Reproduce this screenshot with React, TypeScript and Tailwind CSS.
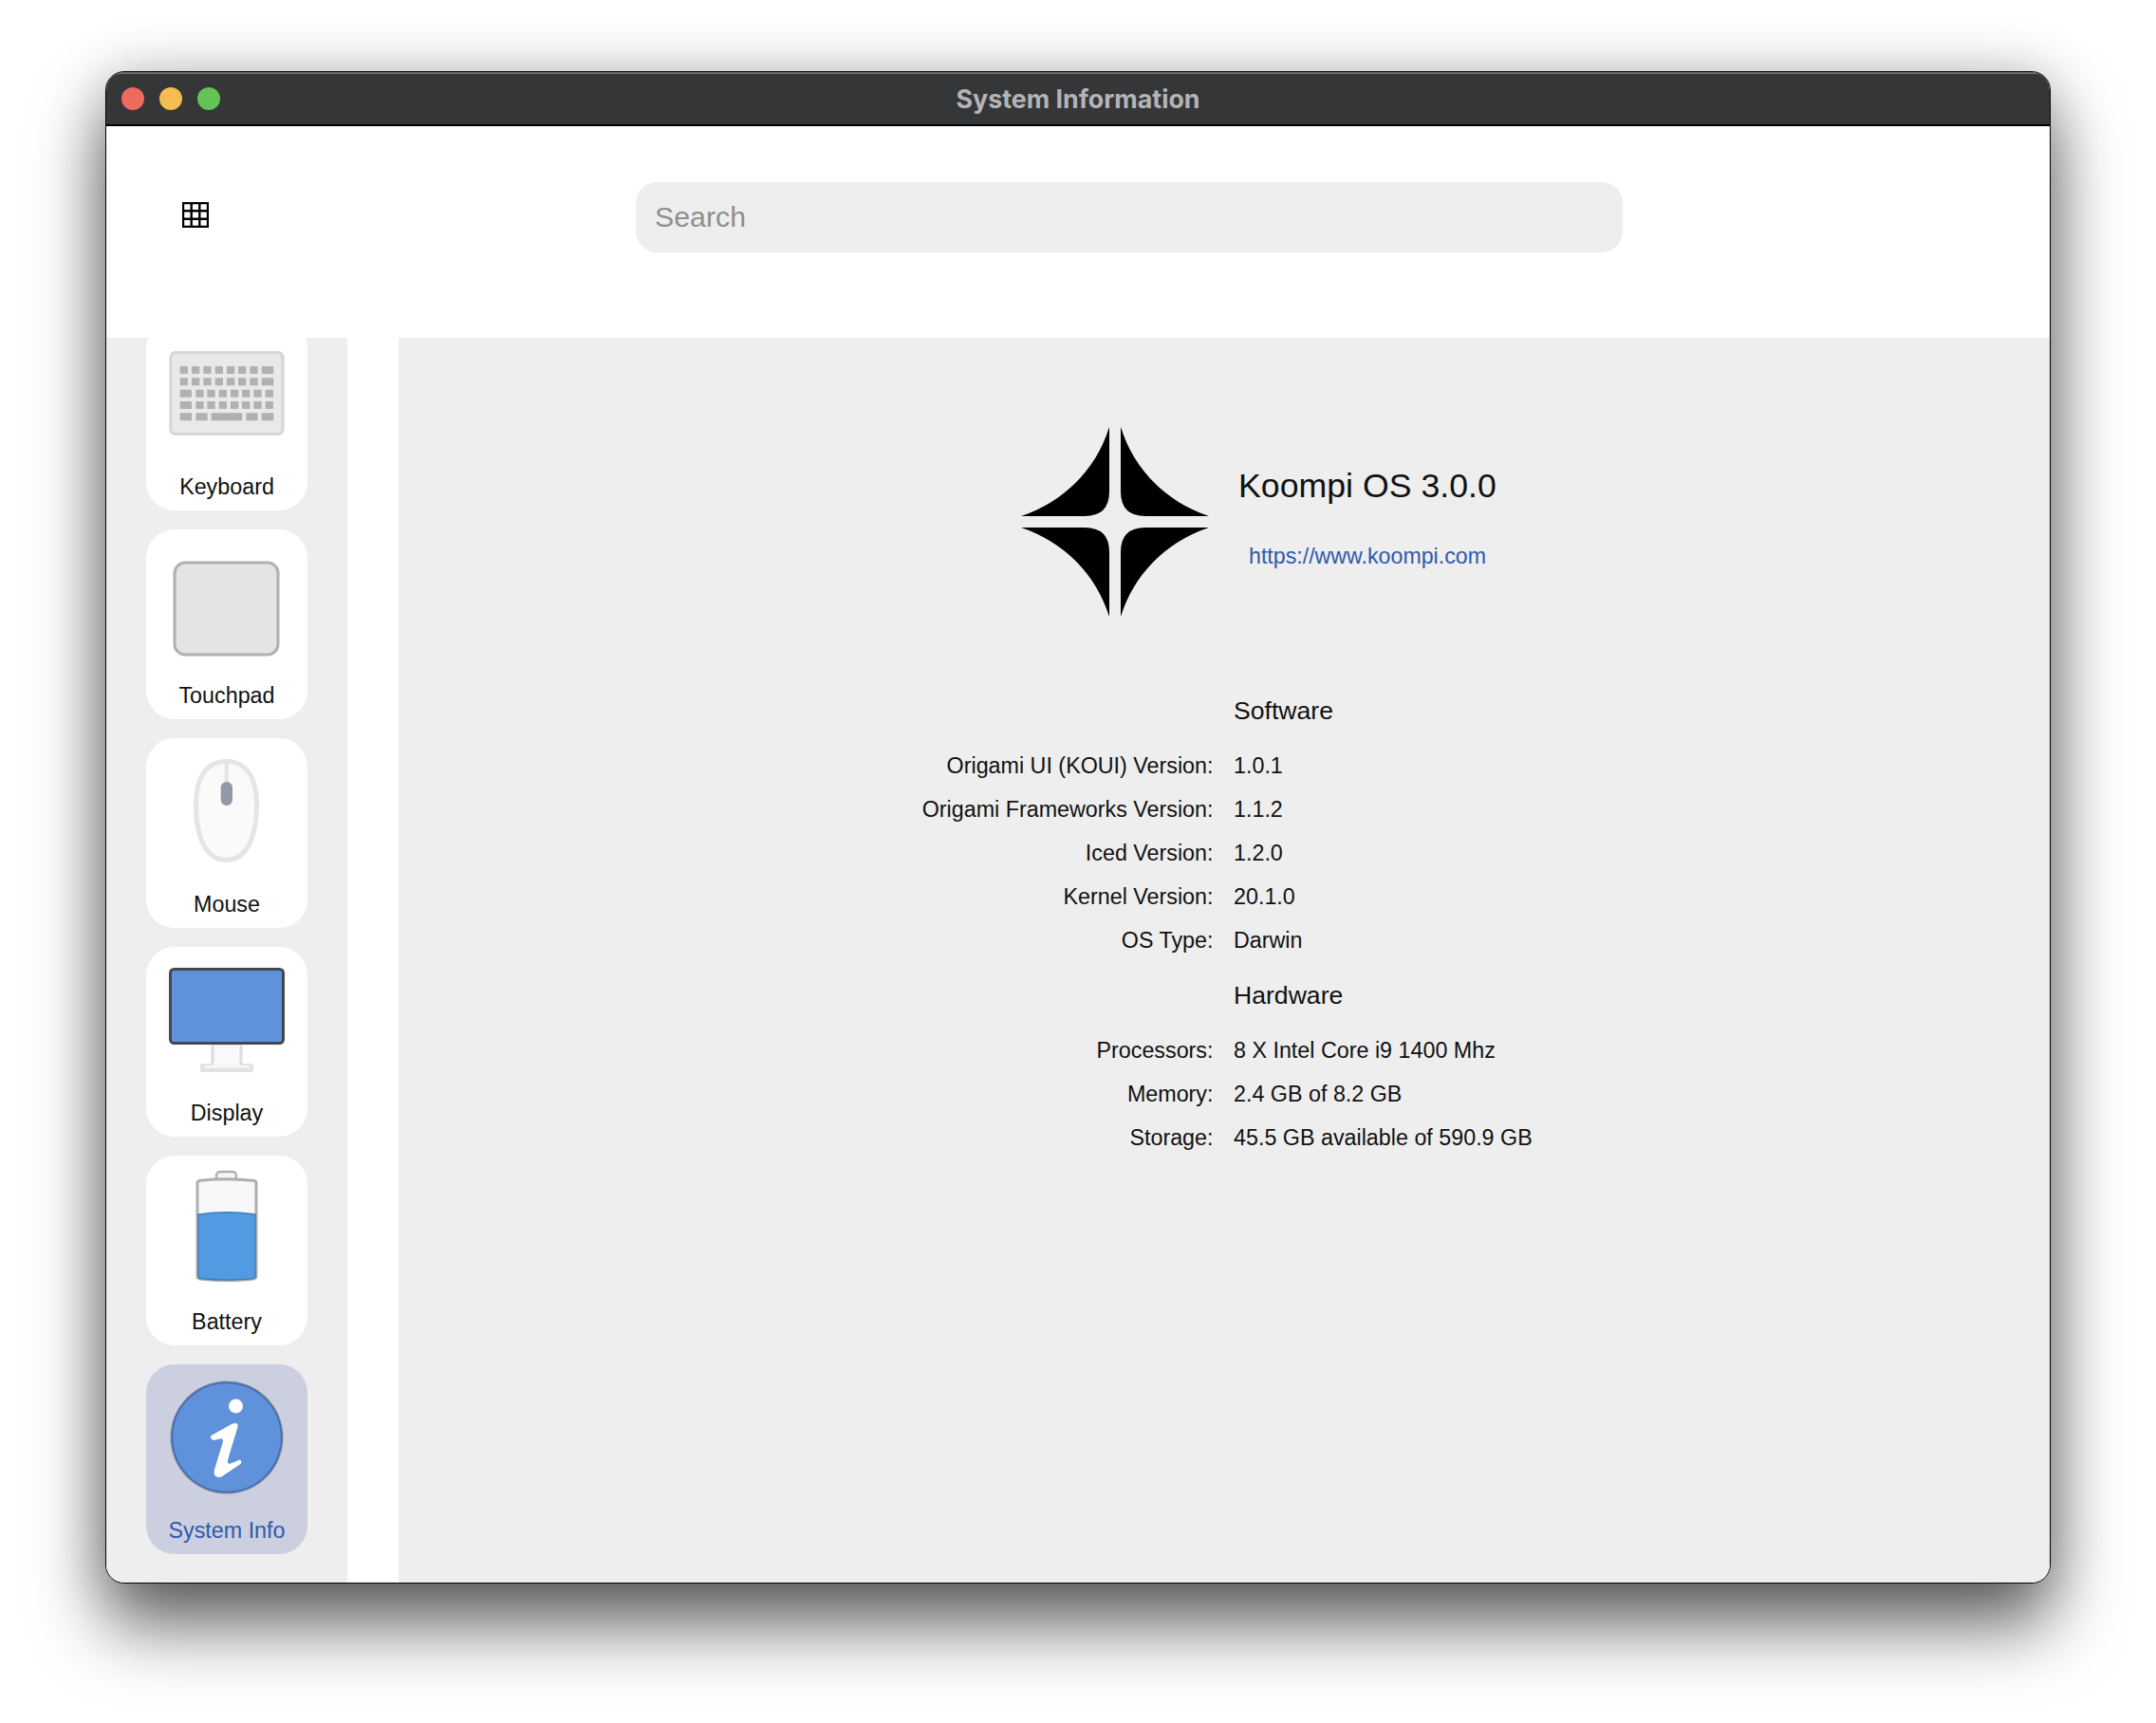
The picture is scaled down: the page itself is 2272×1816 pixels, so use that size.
import React from "react";

const sans = "font-['Liberation_Sans',Arial,sans-serif]";

function KeyboardIcon() {
  const top = [269, 306, 343, 380, 417, 453, 490];
  const mid = [319, 355, 392, 429, 465, 502, 539];
  const key = (x: number, y: number, w: number, k: string) => (
    <rect key={k} x={x} y={y} width={w} height={24} rx={2} fill="#b1b1b1" />
  );
  return (
    <svg width="130" height="130" viewBox="0 0 130 130" className="blur-[0.3px]">
      <g transform="translate(-74 -288) scale(0.3333)">
        <rect x="235" y="930" width="364" height="267" rx="20" fill="#d6d6d6" />
        <rect x="244" y="940" width="345" height="248" rx="12" fill="#e9e9e9" />
        {[978, 1015].map((y) => (
          <g key={y}>
            {top.map((x) => key(x, y, 25, `${x}`))}
            {key(527, y, 38, "e")}
          </g>
        ))}
        {[1052, 1089].map((y) => (
          <g key={y}>
            {key(269, y, 37, "s")}
            {mid.map((x) => key(x, y, 25, `${x}`))}
          </g>
        ))}
        {key(269, 1126, 37, "a")}
        {key(319, 1126, 37, "b")}
        {key(368, 1126, 98, "c")}
        {key(478, 1126, 37, "d")}
        {key(527, 1126, 38, "f")}
      </g>
    </svg>
  );
}

function TouchpadIcon() {
  return (
    <svg width="130" height="130" viewBox="0 0 130 130" className="blur-[0.5px]">
      <rect x="10" y="25" width="109" height="97" rx="11" fill="#e4e4e4" stroke="#b0b0b0" strokeWidth="3" />
    </svg>
  );
}

function MouseIcon() {
  return (
    <svg width="130" height="130" viewBox="0 0 130 130">
      <path
        d="M64.5 14.5C84 14.5 96.5 29 96.5 60C96.5 98 84 118.5 64.5 118.5C45 118.5 32.5 98 32.5 60C32.5 29 45 14.5 64.5 14.5Z"
        fill="#fafafa"
        stroke="#e5e5e5"
        strokeWidth="5"
      />
      <rect x="62.7" y="14" width="4" height="24" fill="#e3e3e3" />
      <rect x="58.7" y="36" width="12.3" height="25" rx="6" fill="#9198a6" />
    </svg>
  );
}

function DisplayIcon() {
  return (
    <svg width="130" height="130" viewBox="0 0 130 130" className="blur-[0.3px]">
      <rect x="50" y="92" width="30" height="23" fill="#f9f9f9" stroke="#dcdcdc" strokeWidth="3" />
      <rect x="37" y="113" width="56" height="9" rx="2" fill="#e2e2e2" />
      <rect x="41" y="115" width="48" height="2.5" fill="#f7f7f7" />
      <rect x="51.5" y="112" width="27" height="3.5" fill="#f9f9f9" />
      <rect x="5.5" y="13.5" width="119" height="78" rx="4" fill="#5f92db" stroke="#43474f" strokeWidth="3" />
    </svg>
  );
}

function BatteryIcon() {
  return (
    <svg width="130" height="130" viewBox="0 0 130 130" className="blur-[0.3px]">
      <rect x="54" y="7" width="21" height="9" rx="4" fill="#f6f6f6" stroke="#b0b0b0" strokeWidth="2.5" />
      <path
        d="M34 19Q34 16.5 37 16.2Q65 13.5 93 16.2Q96 16.5 96 19V117Q96 119.5 93 120Q65 123 37 120Q34 119.5 34 117Z"
        fill="#f8f8f8"
        stroke="#aeaeae"
        strokeWidth="3"
      />
      <path
        d="M35 52Q65 47.5 95 52V117Q95 119 92.5 119.4Q65 122.4 37.5 119.4Q35 119 35 117Z"
        fill="#529be2"
        stroke="#3f7fb9"
        strokeWidth="1.5"
      />
    </svg>
  );
}

function InfoIcon() {
  return (
    <svg width="130" height="130" viewBox="0 0 130 130" className="blur-[0.3px]">
      <circle cx="65" cy="67" r="59.5" fill="#7f8494" />
      <circle cx="65" cy="67" r="57.5" fill="#5f92db" stroke="#3f6fb8" strokeWidth="1.5" />
      <circle cx="74.5" cy="34" r="7.5" fill="#ffffff" />
      <path
        d="M48.2 65.3L70 53Q77.5 50 76.5 56L66.5 89Q64.5 96 69 94.5L78.7 90.5Q81.5 92.5 79.5 95L59.3 108.5Q51 111 51.7 102L60.5 73Q62 67.5 58 68.5L51 70Q47 68.5 48.2 65.3Z"
        fill="#ffffff"
      />
    </svg>
  );
}

function KoompiLogo() {
  const q = "M0 94C45 79 79 45 93 0V68Q93 94 67 94Z";
  return (
    <svg width="200" height="200" viewBox="0 0 200 200" className="shrink-0">
      <path d={q} fill="#000" />
      <path d={q} fill="#000" transform="translate(198 0) scale(-1 1)" />
      <path d={q} fill="#000" transform="translate(0 200) scale(1 -1)" />
      <path d={q} fill="#000" transform="translate(198 200) scale(-1 -1)" />
    </svg>
  );
}

function GridIcon() {
  return (
    <svg width="28" height="27" viewBox="0 0 28 27" className="shrink-0">
      <path d="M1 1H27V26H1ZM9.7 1V26M18.3 1V26M1 9.3H27M1 17.7H27" fill="none" stroke="#000" strokeWidth="2.4" />
    </svg>
  );
}

function Card({ label, icon, active }: { label: string; icon: React.ReactNode; active?: boolean }) {
  return (
    <div
      className={
        "flex h-[200px] w-[170px] shrink-0 flex-col items-center rounded-[30px] pt-[10px] " +
        (active ? "bg-[#cbcfdf] text-[#2f59ad]" : "bg-white text-[#111111]")
      }
    >
      {icon}
      <div className="mt-[21px] flex h-[30px] items-center text-[23.3px] leading-none">{label}</div>
    </div>
  );
}

function Row({ label, value }: { label: string; value: string }) {
  return (
    <div className="grid h-[46px] grid-cols-[858.5px_1fr] items-center gap-x-[21.5px] text-[23.3px] text-[#111111]">
      <div className="text-right">{label}</div>
      <div>{value}</div>
    </div>
  );
}

function Heading({ children, className }: { children: React.ReactNode; className?: string }) {
  return (
    <div className={"grid h-[46px] grid-cols-[858px_1fr] items-center gap-x-[22px] text-[26.6px] text-[#111111] " + (className ?? "")}>
      <div />
      <div>{children}</div>
    </div>
  );
}

export default function App() {
  return (
    <div className={"h-[1816px] w-[2272px] overflow-hidden bg-white pl-[111px] pt-[75px] " + sans}>
      <div className="flex h-[1594px] w-[2050px] flex-col overflow-hidden rounded-[20px] border border-black bg-white shadow-[0_44px_75px_rgba(0,0,0,0.6),0_0_60px_rgba(0,0,0,0.2)]">
        <div className="grid h-[57px] shrink-0 grid-cols-[1fr_auto_1fr] items-center border-b-2 border-t-2 border-b-black border-t-[#6e6e6f] bg-[#353638] px-[16px] pb-[1px]">
          <div className="flex gap-[16px]">
            <div className="h-[24px] w-[24px] rounded-full bg-[#ee6a5f]" />
            <div className="h-[24px] w-[24px] rounded-full bg-[#f5bd4f]" />
            <div className="h-[24px] w-[24px] rounded-full bg-[#61c454]" />
          </div>
          <div className="font-['Inter',sans-serif] text-[26.8px] font-bold text-[#b4b4b6]">System Information</div>
          <div />
        </div>
        <div className="flex h-[223px] shrink-0 items-start pl-[80px]">
          <div className="mt-[80px]">
            <GridIcon />
          </div>
          <div className="ml-[450px] mt-[59px] flex h-[74px] w-[1040px] items-center rounded-[22px] bg-[#eeeeee] pl-[20px] text-[30.3px] text-[#8e8e8e]">
            Search
          </div>
        </div>
        <div className="flex min-h-0 flex-1">
          <div className="flex w-[254px] shrink-0 flex-col items-center justify-end gap-[20px] overflow-hidden bg-[#eeeeee] pb-[30px]">
            <Card label="Keyboard" icon={<KeyboardIcon />} />
            <Card label="Touchpad" icon={<TouchpadIcon />} />
            <Card label="Mouse" icon={<MouseIcon />} />
            <Card label="Display" icon={<DisplayIcon />} />
            <Card label="Battery" icon={<BatteryIcon />} />
            <Card label="System Info" icon={<InfoIcon />} active />
          </div>
          <div className="ml-[54px] flex min-w-0 flex-1 flex-col bg-[#eeeeee]">
            <div className="flex pl-[656px] pt-[94px]">
              <KoompiLogo />
              <div className="ml-[29px] flex flex-col">
                <div className="mt-[41px] flex h-[44px] items-center text-[35.7px] text-[#111111]">Koompi OS 3.0.0</div>
                <div className="ml-[11px] mt-[36px] flex h-[30px] items-center text-[23.2px] text-[#2f59ad]">
                  https://www.koompi.com
                </div>
              </div>
            </div>
            <Heading className="mt-[77px]">Software</Heading>
            <div className="mt-[11px]">
              <Row label="Origami UI (KOUI) Version:" value="1.0.1" />
              <Row label="Origami Frameworks Version:" value="1.1.2" />
              <Row label="Iced Version:" value="1.2.0" />
              <Row label="Kernel Version:" value="20.1.0" />
              <Row label="OS Type:" value="Darwin" />
            </div>
            <Heading className="mt-[13px]">Hardware</Heading>
            <div className="mt-[11px]">
              <Row label="Processors:" value="8 X Intel Core i9 1400 Mhz" />
              <Row label="Memory:" value="2.4 GB of 8.2 GB" />
              <Row label="Storage:" value="45.5 GB available of 590.9 GB" />
            </div>
          </div>
        </div>
      </div>
    </div>
  );
}
